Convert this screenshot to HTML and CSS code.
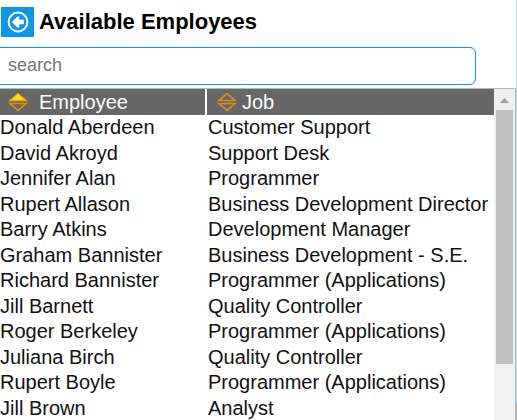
FILE: index.html
```html
<!DOCTYPE html>
<html lang="en">
<head>
<meta charset="utf-8">
<title>Available Employees</title>
<link rel="stylesheet" href="styles.css">
</head>
<body>
<main class="panel">
  <header class="heading">
    <button class="back" type="button" aria-label="Back">
      <svg width="22" height="22" viewBox="0 0 22 22"><circle cx="11" cy="11" r="9.4" fill="none" stroke="#fff" stroke-width="2"/><path d="M4.800 11 10.500 5.600H12.200V8.800H16.800V13.200H12.200V16.400H10.500Z" fill="#fff"/></svg>
    </button>
    <h1>Available Employees</h1>
  </header>
  <input class="search" type="text" placeholder="search" aria-label="Search employees">
  <section class="list">
    <div class="rows">
      <table>
        <colgroup><col class="col-name"><col></colgroup>
        <thead>
          <tr>
            <th scope="col"><div class="head head-name"><svg width="20" height="20" viewBox="0 0 20 20"><path d="M1.800 8.500 10 1.500l8.200 7Z" fill="#ffe600" stroke="#f5a80c" stroke-width="1.300"/><path d="M1.800 11.500H18.200L10 18.500Z" fill="none" stroke="#d98c1c" stroke-width="1.700"/></svg>Employee</div></th>
            <th scope="col"><div class="head head-job"><svg width="20" height="20" viewBox="0 0 20 20"><path d="M1.800 8.500 10 1.500l8.200 7ZM1.800 11.500H18.200L10 18.500Z" fill="none" stroke="#d98c1c" stroke-width="1.700"/></svg>Job</div></th>
          </tr>
        </thead>
        <tbody>
          <tr><td>Donald Aberdeen</td><td>Customer Support</td></tr>
          <tr><td>David Akroyd</td><td>Support Desk</td></tr>
          <tr><td>Jennifer Alan</td><td>Programmer</td></tr>
          <tr><td>Rupert Allason</td><td>Business Development Director</td></tr>
          <tr><td>Barry Atkins</td><td>Development Manager</td></tr>
          <tr><td>Graham Bannister</td><td>Business Development - S.E.</td></tr>
          <tr><td>Richard Bannister</td><td>Programmer (Applications)</td></tr>
          <tr><td>Jill Barnett</td><td>Quality Controller</td></tr>
          <tr><td>Roger Berkeley</td><td>Programmer (Applications)</td></tr>
          <tr><td>Juliana Birch</td><td>Quality Controller</td></tr>
          <tr><td>Rupert Boyle</td><td>Programmer (Applications)</td></tr>
          <tr><td>Jill Brown</td><td>Analyst</td></tr>
        </tbody>
      </table>
    </div>
    <div class="scrollbar">
      <svg width="9" height="5" viewBox="0 0 9 5"><path d="M0 5 4.500 0 9 5Z" fill="#a0a0a0"/></svg>
      <div class="thumb"></div>
    </div>
  </section>
</main>
<div class="edge"></div>
</body>
</html>
```
FILE: styles.css
```css
* {
  box-sizing: border-box;
}

body {
  margin: 0;
  height: 100vh;
  display: flex;
  overflow: hidden;
  background: #fff;
  color: #111;
  font-family: "Liberation Sans", Arial, sans-serif;
  font-size: 20px;
}

.panel {
  flex: 1;
  min-width: 0;
  display: flex;
  flex-direction: column;
}

.edge {
  width: 1px;
  background: linear-gradient(#c5d3e2 0 96%, #a8a8a8 96%);
}

.heading {
  display: flex;
  align-items: center;
  gap: 5px;
  padding: 7px 1px 0;
}

.back {
  display: grid;
  place-items: center;
  width: 33px;
  height: 30px;
  padding: 0;
  border: 0;
  background: #0d98e5;
}

h1 {
  margin: 0;
  color: #000;
  font-size: 22px;
  line-height: 28px;
}

.search {
  height: 38px;
  margin: 10px 40px 3px -6px;
  padding: 0 13px 1px;
  border: 1px solid #0d98e5;
  border-radius: 6px;
  background: #fff;
  font: 18px "Liberation Sans", Arial, sans-serif;
}

.search::placeholder {
  color: #757575;
}

.list {
  flex: 1;
  min-height: 0;
  display: flex;
  border: 1px solid #b8b8b8;
  border-width: 1px 1px 0 0;
}

.rows {
  flex: 1;
  min-width: 0;
  overflow: hidden;
}

table {
  width: 100%;
  table-layout: fixed;
  border-collapse: collapse;
}

.col-name {
  width: 206px;
}

th {
  height: 26px;
  padding: 0;
  background: #666;
  color: #fff;
  font-weight: 400;
}

th:first-child {
  border-right: 2px solid #fff;
}

.head {
  display: flex;
  align-items: center;
  line-height: 26px;
}

.head-name {
  gap: 11px;
  padding-left: 8px;
}

.head-job {
  gap: 5px;
  padding-left: 10px;
}

td {
  height: 25px;
  padding: 0;
  line-height: 25px;
  white-space: nowrap;
}

tr:nth-child(even) td {
  height: 26px;
}

td + td {
  padding-left: 2px;
}

.scrollbar {
  width: 21px;
  display: flex;
  flex-direction: column;
  align-items: center;
  gap: 7px;
  padding: 9px 2px 0;
  background: #f0f0f0;
}

.thumb {
  width: 100%;
  height: 79%;
  background: #c0c0c0;
}
```
